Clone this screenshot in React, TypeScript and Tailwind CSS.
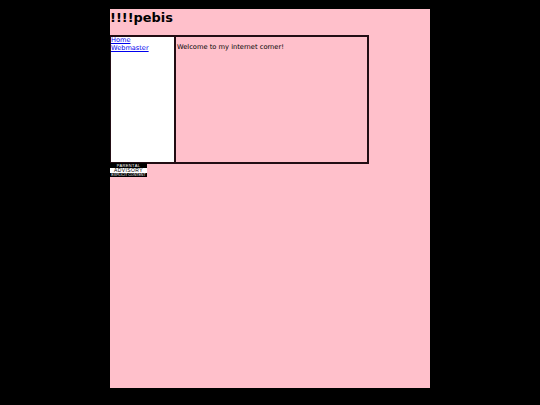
import React from 'react';

const App: React.FC = () => {
  return (
    <div className="w-[540px] h-[405px] bg-black pt-[9px] overflow-hidden font-['DejaVu_Sans',sans-serif]">
      <div className="w-[320px] h-[379px] ml-[110px] bg-[#ffc0cb] text-black">
        <h1 className="h-[26px] text-[12.9px] leading-[18px] font-bold">!!!!pebis</h1>
        <div className="flex w-[259px] h-[129px] border-y-2 border-r-2 border-l border-[#220d14]">
          <div className="w-[65px] h-full bg-white border-r-2 border-[#220d14] text-[6.6px] leading-[8px]">
            <a href="#" className="block -mt-px text-[#0000ee] underline">Home</a>
            <a href="#" className="block text-[#0000ee] underline">Webmaster</a>
          </div>
          <div className="flex-1 pl-px pt-[6px] text-[6.7px] leading-[8px]">Welcome to my internet corner!</div>
        </div>
        <div className="w-[37px] h-[14px] -mt-px bg-black flex flex-col items-center font-['Liberation_Sans',sans-serif] text-white overflow-hidden">
          <div className="h-[5px] text-[4px] leading-[5px] tracking-[0.4px] whitespace-nowrap">PARENTAL</div>
          <div className="h-[5px] w-full bg-white text-black text-center text-[5px] leading-[5px] tracking-[0.4px] whitespace-nowrap">ADVISORY</div>
          <div className="h-[4px] text-[3.6px] leading-[4px] whitespace-nowrap">EXPLICIT CONTENT</div>
        </div>
      </div>
    </div>
  );
};

export default App;
